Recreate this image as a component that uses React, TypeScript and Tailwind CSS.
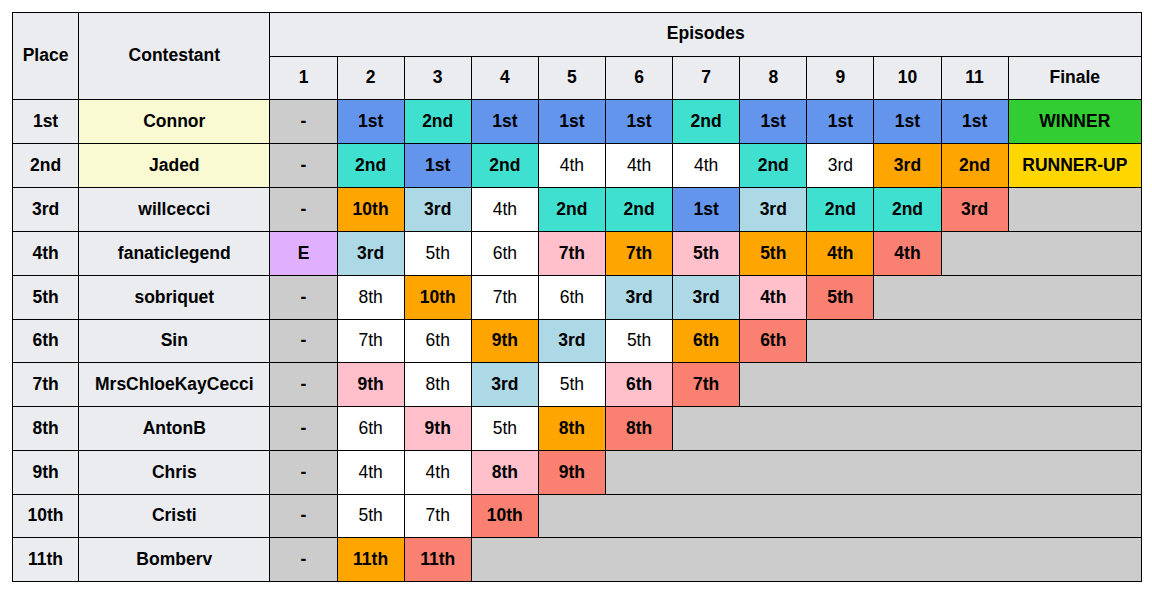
import React from 'react';

type Cell = [string, string];

const C: Record<string, string> = {
  B: 'bg-[#6495ed] font-bold',
  T: 'bg-[#40e0d0] font-bold',
  O: 'bg-[#ffa500] font-bold',
  L: 'bg-[#add8e6] font-bold',
  P: 'bg-[#ffc0cb] font-bold',
  S: 'bg-[#fa8072] font-bold',
  W: 'bg-white font-normal',
  G: 'bg-[#32cd32] font-bold',
  Y: 'bg-[#ffd700] font-bold',
  E: 'bg-[#e0b0ff] font-bold',
  D: 'bg-[#cccccc] font-bold',
};

const rows: { place: string; name: string; top?: boolean; h: string; cells: Cell[] }[] = [
  {
    place: '1st', name: 'Connor', top: true, h: 'h-[44px]',
    cells: [['-', 'D'], ['1st', 'B'], ['2nd', 'T'], ['1st', 'B'], ['1st', 'B'], ['1st', 'B'], ['2nd', 'T'], ['1st', 'B'], ['1st', 'B'], ['1st', 'B'], ['1st', 'B'], ['WINNER', 'G']],
  },
  {
    place: '2nd', name: 'Jaded', top: true, h: 'h-[44px]',
    cells: [['-', 'D'], ['2nd', 'T'], ['1st', 'B'], ['2nd', 'T'], ['4th', 'W'], ['4th', 'W'], ['4th', 'W'], ['2nd', 'T'], ['3rd', 'W'], ['3rd', 'O'], ['2nd', 'O'], ['RUNNER-UP', 'Y']],
  },
  {
    place: '3rd', name: 'willcecci', h: 'h-[44px]',
    cells: [['-', 'D'], ['10th', 'O'], ['3rd', 'L'], ['4th', 'W'], ['2nd', 'T'], ['2nd', 'T'], ['1st', 'B'], ['3rd', 'L'], ['2nd', 'T'], ['2nd', 'T'], ['3rd', 'S']],
  },
  {
    place: '4th', name: 'fanaticlegend', h: 'h-[44px]',
    cells: [['E', 'E'], ['3rd', 'L'], ['5th', 'W'], ['6th', 'W'], ['7th', 'P'], ['7th', 'O'], ['5th', 'P'], ['5th', 'O'], ['4th', 'O'], ['4th', 'S']],
  },
  {
    place: '5th', name: 'sobriquet', h: 'h-[44px]',
    cells: [['-', 'D'], ['8th', 'W'], ['10th', 'O'], ['7th', 'W'], ['6th', 'W'], ['3rd', 'L'], ['3rd', 'L'], ['4th', 'P'], ['5th', 'S']],
  },
  {
    place: '6th', name: 'Sin', h: 'h-[43px]',
    cells: [['-', 'D'], ['7th', 'W'], ['6th', 'W'], ['9th', 'O'], ['3rd', 'L'], ['5th', 'W'], ['6th', 'O'], ['6th', 'S']],
  },
  {
    place: '7th', name: 'MrsChloeKayCecci', h: 'h-[44px]',
    cells: [['-', 'D'], ['9th', 'P'], ['8th', 'W'], ['3rd', 'L'], ['5th', 'W'], ['6th', 'P'], ['7th', 'S']],
  },
  {
    place: '8th', name: 'AntonB', h: 'h-[44px]',
    cells: [['-', 'D'], ['6th', 'W'], ['9th', 'P'], ['5th', 'W'], ['8th', 'O'], ['8th', 'S']],
  },
  {
    place: '9th', name: 'Chris', h: 'h-[44px]',
    cells: [['-', 'D'], ['4th', 'W'], ['4th', 'W'], ['8th', 'P'], ['9th', 'S']],
  },
  {
    place: '10th', name: 'Cristi', h: 'h-[43px]',
    cells: [['-', 'D'], ['5th', 'W'], ['7th', 'W'], ['10th', 'S']],
  },
  {
    place: '11th', name: 'Bomberv', h: 'h-[44px]',
    cells: [['-', 'D'], ['11th', 'O'], ['11th', 'S']],
  },
];

const TOTAL = 12;
const cell = 'border border-black text-center align-middle px-0 pt-0 pb-[2px]';

const App = () => {
  return (
    <div className="bg-white w-[1152px] h-[592px] pt-[12px] pl-[12px] font-['Liberation_Sans',Arial,sans-serif] text-[17.5px] leading-[20px] text-black">
      <table className="border-collapse table-fixed w-[1130px]">
        <colgroup>
          <col className="w-[66px]" />
          <col className="w-[191px]" />
          {Array.from({ length: 11 }, (_, i) => (
            <col key={i} className="w-[67px]" />
          ))}
          <col className="w-[133px]" />
        </colgroup>
        <thead>
          <tr className="h-[44px] bg-[#eaecf0] font-bold">
            <th rowSpan={2} className={cell}>Place</th>
            <th rowSpan={2} className={cell}>Contestant</th>
            <th colSpan={12} className="border border-black text-center align-middle px-0 pt-0 pb-[4px]">Episodes</th>
          </tr>
          <tr className="h-[43px] bg-[#eaecf0] font-bold">
            {Array.from({ length: 11 }, (_, i) => (
              <th key={i} className={cell}>{i + 1}</th>
            ))}
            <th className={cell}>Finale</th>
          </tr>
        </thead>
        <tbody>
          {rows.map((r) => (
            <tr key={r.place} className={r.h}>
              <td className={`${cell} bg-[#eaecf0] font-bold`}>{r.place}</td>
              <td className={`${cell} font-bold ${r.top ? 'bg-[#fafad2]' : 'bg-[#eaecf0]'}`}>{r.name}</td>
              {r.cells.map(([t, k], i) => (
                <td key={i} className={`${cell} ${C[k]}`}>{t}</td>
              ))}
              {r.cells.length < TOTAL && (
                <td colSpan={TOTAL - r.cells.length} className={`${cell} bg-[#cccccc]`} />
              )}
            </tr>
          ))}
        </tbody>
      </table>
    </div>
  );
};

export default App;
